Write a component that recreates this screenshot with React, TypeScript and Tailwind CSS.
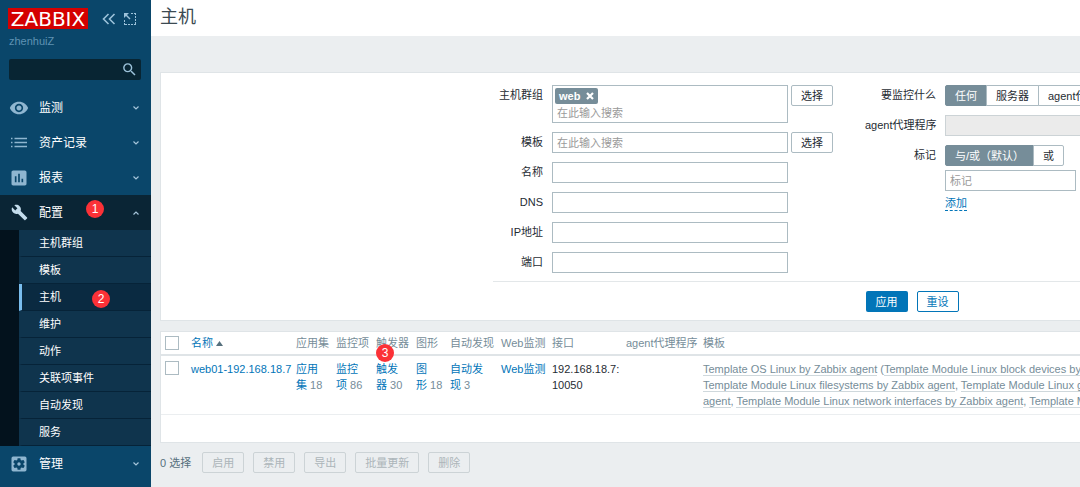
import React, { useState } from 'react';
import { MdAssessment, MdBuild, MdSearch, MdSettingsApplications, MdVisibility } from 'react-icons/md';

const SUB_ITEMS = ['主机群组', '模板', '主机', '维护', '动作', '关联项事件', '自动发现', '服务'];

const COUNTS = [
  { label: '应用集', count: 18 },
  { label: '监控项', count: 86 },
  { label: '触发器', count: 30 },
  { label: '图形', count: 18 },
  { label: '自动发现', count: 3 },
];

const MODULES = [
  'Template Module Linux block devices by Zabbix agent',
  'Template Module Linux CPU by Zabbix agent',
  'Template Module Linux filesystems by Zabbix agent',
  'Template Module Linux generic by Zabbix agent',
  'Template Module Linux memory by Zabbix agent',
  'Template Module Linux network interfaces by Zabbix agent',
  'Template Module Zabbix agent',
];

const MASS_ACTIONS = ['启用', '禁用', '导出', '批量更新', '删除'];

export default function App() {
  return (
    <div className="flex min-h-screen overflow-hidden bg-[#ebeef0] font-['Liberation_Sans','Noto_Sans_CJK_SC',sans-serif] text-[11px] leading-4 text-[#1f2c33]">
      <Sidebar />
      <main className="min-w-0 flex-1 overflow-hidden">
        <header className="h-9 bg-white px-[9px] pt-1">
          <h1 className="text-lg leading-[26px] text-[#3c4a52]">主机</h1>
        </header>
        <div className="min-w-[1522px] px-[9px] pt-9">
          <Filter />
          <HostTable />
          <div className="flex items-center pt-[9px]">
            <span className="mr-[11px] text-[#56707d]">0 选择</span>
            <div className="flex gap-[9px]">
              {MASS_ACTIONS.map(action => (
                <button key={action} disabled className="h-[21px] rounded-xs border border-[#ccd3d6] px-[9px] text-[#acb5b9]">
                  {action}
                </button>
              ))}
            </div>
          </div>
        </div>
      </main>
    </div>
  );
}

function Sidebar() {
  return (
    <aside className="w-[151px] shrink-0 bg-[#0a466a] text-white">
      <div className="flex items-center px-2 pt-2">
        <a href="#" className="flex h-[21px] w-20 items-center justify-center bg-[#d40000] font-['DejaVu_Sans',sans-serif] text-xl leading-5">ZABBIX</a>
        <button aria-label="collapse" className="ml-[14px] text-[#9cc2da]">
          <svg width="14" height="12" viewBox="0 0 14 12" fill="none" stroke="currentColor" strokeWidth="1.6">
            <path d="M6.5 1 1.5 6l5 5M12.5 1l-5 5 5 5" />
          </svg>
        </button>
        <button aria-label="hide" className="ml-2 text-[#9cc2da]">
          <svg width="12" height="12" viewBox="0 0 12 12" fill="none" stroke="currentColor">
            <path d="M7 .5h5M11.500 0v12M12 11.500H0M.5 12V6" strokeDasharray="2 1" />
            <path d="m2 2 4 4" strokeWidth="1.5" />
            <path d="M0 0h5L0 5z" fill="currentColor" stroke="none" />
          </svg>
        </button>
      </div>
      <p className="mt-1 px-[9px] text-[#5f92b3]">zhenhuiZ</p>
      <form className="ml-[9px] mr-[10px] mt-[10px] flex h-[21px] items-center rounded-xs bg-[#082533]">
        <input aria-label="search" className="h-full min-w-0 flex-1 bg-transparent px-1 outline-none" />
        <button type="button" aria-label="search" className="px-[3px] text-[#9cc2da]">
          <MdSearch className="h-[17px] w-[17px]" />
        </button>
      </form>
      <nav className="mt-[10px]">
        <MenuItem icon={<MdVisibility className="h-5 w-5" />} label="监测" />
        <MenuItem icon={<ListIcon />} label="资产记录" />
        <MenuItem icon={<MdAssessment className="h-5 w-5" />} label="报表" />
        <MenuItem icon={<MdBuild className="h-[17px] w-[17px]" />} label="配置" open />
        <ul className="border-l-[19px] border-[#03121d]">
          {SUB_ITEMS.map(item => (
            <li key={item} className="relative">
              <a
                href="#"
                className={`flex h-[27px] items-center border-b border-b-[#062338] border-l-[3px] pl-[17px] ${
                  item === '主机' ? 'border-l-[#79bdee] bg-[#0a2a41]' : 'border-l-[#0f344d] bg-[#0f344d]'
                }`}
              >
                {item}
              </a>
              {item === '主机' && <Badge className="left-[73px] top-[6px]">2</Badge>}
            </li>
          ))}
        </ul>
        <MenuItem icon={<MdSettingsApplications className="h-5 w-5" />} label="管理" />
      </nav>
    </aside>
  );
}

function MenuItem({ icon, label, open }: { icon: React.ReactNode; label: string; open?: boolean }) {
  return (
    <div className="relative">
      <a href="#" className={`flex h-[35px] items-center pl-[9px] pr-3 text-xs ${open ? 'bg-[#0a2535]' : ''}`}>
        <span className={`flex w-5 justify-center ${open ? 'text-[#c3dcec]' : 'text-[#8fb6d0]'}`}>{icon}</span>
        <span className="ml-[10px] flex-1">{label}</span>
        <svg width="6" height="4" viewBox="0 0 6 4" fill="none" stroke="#a5c5da" strokeWidth="1.2">
          <path d={open ? 'M.5 3.500 3 1l2.500 2.500' : 'M.5.500 3 3 5.500.500'} />
        </svg>
      </a>
      {open && <Badge className="left-[86px] top-[5px]">1</Badge>}
    </div>
  );
}

function ListIcon() {
  return (
    <svg width="16" height="11" viewBox="0 0 16 11" stroke="currentColor" strokeWidth="1.400">
      <path d="M0 1.500h1.500M3.500 1.500H16M0 5.500h1.500M3.500 5.500H16M0 9.500h1.500M3.500 9.500H16" />
    </svg>
  );
}

function Badge({ className, children }: { className: string; children: React.ReactNode }) {
  return (
    <span className={`absolute z-10 flex h-[18px] w-[18px] items-center justify-center rounded-full bg-[#fb3137] text-xs leading-none text-white ${className}`}>
      {children}
    </span>
  );
}

const fieldClass = 'h-[21px] w-[236px] border border-[#acbbc2] bg-white px-1 outline-none placeholder:text-[#9a9a9a]';

function Filter() {
  const [group, setGroup] = useState(true);

  return (
    <form className="border border-[#dfe4e7] bg-white pb-2 pt-3">
      <div className="mx-auto w-[838px]">
        <div className="flex gap-8">
          <div className="flex flex-col gap-[9px]">
            <Row label="主机群组" id="groups" labelClass="w-[50px]">
              <div className="flex h-[38px] w-[236px] flex-col border border-[#acbbc2] px-[2px] pt-[2px]">
                {group && (
                  <span className="flex h-4 items-center gap-[6px] self-start rounded-xs bg-[#768d99] px-1 font-bold text-white">
                    web
                    <button type="button" aria-label="remove web" onClick={() => setGroup(false)}>
                      <svg width="8" height="8" viewBox="0 0 8 8" stroke="currentColor" strokeWidth="2.200">
                        <path d="m1 1 6 6M7 1 1 7" />
                      </svg>
                    </button>
                  </span>
                )}
                <input id="groups" placeholder="在此输入搜索" className="h-[18px] px-[2px] outline-none placeholder:text-[#9a9a9a]" />
              </div>
              <SelectButton />
            </Row>
            <Row label="模板" id="templates" labelClass="w-[50px]">
              <input id="templates" placeholder="在此输入搜索" className={fieldClass} />
              <SelectButton />
            </Row>
            {['名称', 'DNS', 'IP地址', '端口'].map(name => (
              <Row key={name} label={name} id={name} labelClass="w-[50px]">
                <input id={name} className={fieldClass} />
              </Row>
            ))}
          </div>

          <div className="flex flex-col gap-[9px]">
            <Row label="要监控什么" labelClass="w-[71px]">
              <Segments options={['任何', '服务器', 'agent代理程序']} />
            </Row>
            <Row label="agent代理程序" id="proxy" labelClass="w-[71px]">
              <input id="proxy" disabled className="h-[21px] w-[236px] border border-[#ccd3d6] bg-[#ebebeb]" />
            </Row>
            <Row label="标记" id="tag" labelClass="w-[71px]">
              <div className="flex flex-col items-start gap-1">
                <Segments options={['与/或（默认）', '或']} />
                <input id="tag" placeholder="标记" className="h-[21px] w-[131px] border border-[#acbbc2] px-1 outline-none placeholder:text-[#9a9a9a]" />
                <button type="button" className="mt-px border-b border-dashed border-[#0275b8] leading-[14px] text-[#0275b8]">
                  添加
                </button>
              </div>
            </Row>
          </div>
        </div>

        <div className="mt-2 flex justify-center gap-[9px] border-t border-[#e3e7e9] pt-[9px]">
          <button type="button" className="h-[21px] w-[42px] rounded-xs bg-[#0275b8] text-white">应用</button>
          <button type="button" className="h-[21px] w-[42px] rounded-xs border border-[#0275b8] text-[#0275b8]">重设</button>
        </div>
      </div>
    </form>
  );
}

function Row({ label, id, labelClass, children }: { label: string; id?: string; labelClass: string; children: React.ReactNode }) {
  return (
    <div className="flex items-start">
      <label htmlFor={id} className={`mr-[9px] shrink-0 whitespace-nowrap text-right leading-[21px] ${labelClass}`}>{label}</label>
      <div className="flex items-start gap-[3px]">{children}</div>
    </div>
  );
}

function SelectButton() {
  return <button type="button" className="h-[21px] w-[42px] rounded-xs border border-[#acbbc2]">选择</button>;
}

function Segments({ options }: { options: string[] }) {
  const [selected, setSelected] = useState(options[0]);

  return (
    <div className="flex">
      {options.map(option => (
        <button
          key={option}
          type="button"
          onClick={() => setSelected(option)}
          className={`-ml-px h-[21px] whitespace-nowrap border px-[9px] first:ml-0 first:rounded-l-xs last:rounded-r-xs ${
            option === selected ? 'border-[#768d99] bg-[#768d99] text-white' : 'border-[#acbbc2] bg-white'
          }`}
        >
          {option}
        </button>
      ))}
    </div>
  );
}

function HostTable() {
  return (
    <div className="mt-[10px] border border-[#dfe4e7] bg-white pb-[27px]">
      <table className="w-full table-fixed border-collapse text-left">
        <colgroup>
          <col className="w-[26px]" />
          <col className="w-[105px]" />
          <col className="w-10" />
          <col className="w-10" />
          <col className="w-10" />
          <col className="w-[34px]" />
          <col className="w-[51px]" />
          <col className="w-[51px]" />
          <col className="w-[74px]" />
          <col className="w-[77px]" />
          <col />
        </colgroup>
        <thead>
          <tr className="h-[23px] whitespace-nowrap border-b-2 border-[#dfe4e7] text-[#768d99] *:px-1 *:font-normal">
            <th><Checkbox label="all" /></th>
            <th>
              <a href="#" className="flex items-center gap-[3px] text-[#0275b8]">
                名称
                <svg width="7" height="5" viewBox="0 0 7 5" fill="#56707d"><path d="M3.500 0 7 5H0z" /></svg>
              </a>
            </th>
            <th>应用集</th>
            <th>监控项</th>
            <th className="relative">
              触发器
              <Badge className="left-1 top-3">3</Badge>
            </th>
            <th>图形</th>
            <th>自动发现</th>
            <th>Web监测</th>
            <th>接口</th>
            <th>agent代理程序</th>
            <th>模板</th>
          </tr>
        </thead>
        <tbody>
          <tr className="border-b border-[#ebeef0] align-top *:px-1 *:py-[5px]">
            <td><Checkbox label="web01" /></td>
            <td className="whitespace-nowrap"><a href="#" className="text-[#0275b8]">web01-192.168.18.7</a></td>
            {COUNTS.map(({ label, count }) => (
              <td key={label} className="text-[#768d99]">
                <a href="#" className="text-[#0275b8]">{label}</a>{'\u00a0'}{count}
              </td>
            ))}
            <td className="whitespace-nowrap"><a href="#" className="text-[#0275b8]">Web监测</a></td>
            <td>192.168.18.7:<wbr />10050</td>
            <td></td>
            <td className="text-[#768d99]">
              <div className="w-[712px]">
                <TemplateLink>Template OS Linux by Zabbix agent</TemplateLink>
                {' ('}
                {MODULES.map((name, i) => (
                  <React.Fragment key={name}>
                    {i > 0 && ', '}
                    <TemplateLink>{name}</TemplateLink>
                  </React.Fragment>
                ))}
                )
              </div>
            </td>
          </tr>
        </tbody>
      </table>
    </div>
  );
}

function Checkbox({ label }: { label: string }) {
  return <input type="checkbox" aria-label={label} className="block h-[14px] w-[14px] appearance-none border border-[#acbbc2] bg-white" />;
}

function TemplateLink({ children }: { children: React.ReactNode }) {
  return <a href="#" className="border-b border-[#cfd8dc]">{children}</a>;
}
